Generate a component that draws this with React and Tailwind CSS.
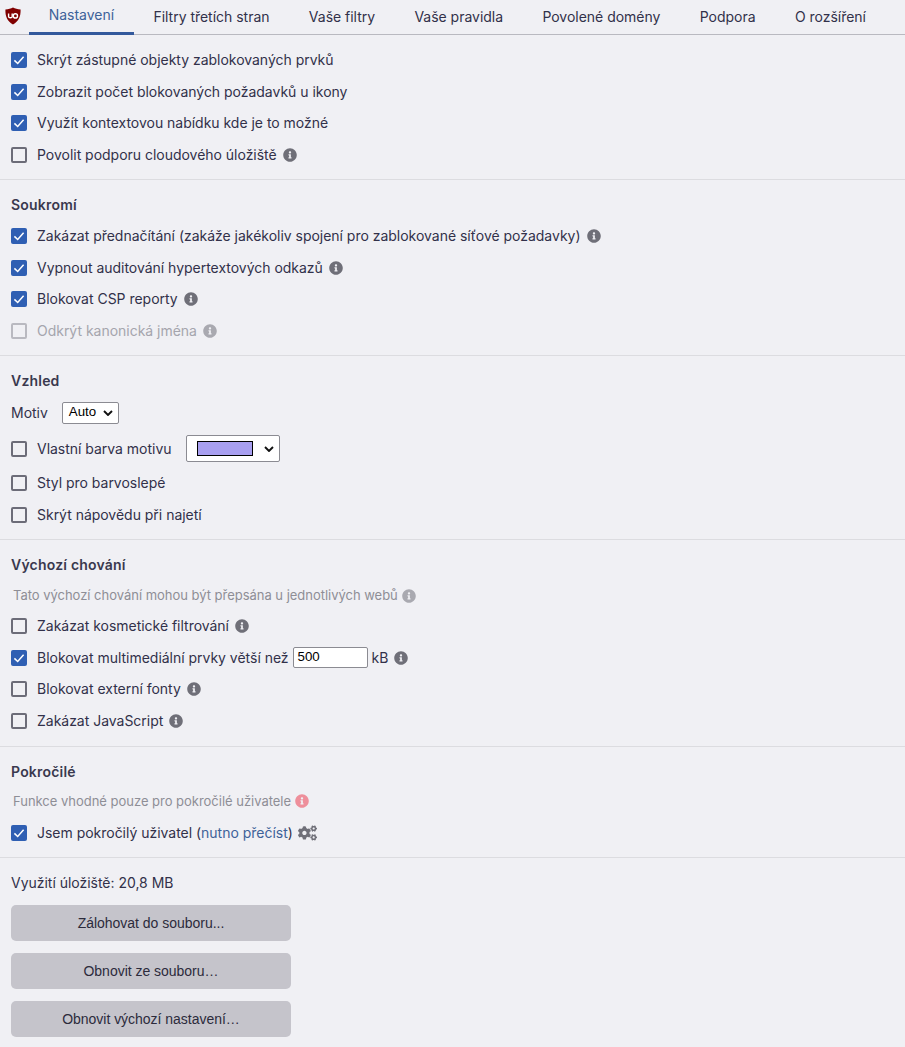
import { FaInfoCircle, FaCogs } from "react-icons/fa";

const tabs = [
  "Nastavení",
  "Filtry třetích stran",
  "Vaše filtry",
  "Vaše pravidla",
  "Povolené domény",
  "Podpora",
  "O rozšíření",
];

function Logo() {
  return (
    <svg viewBox="0 0 16 18" className="w-4 h-[18px]">
      <path
        d="M8 .5C10 1.6 12.6 2.4 15.6 2.5 15.8 9.5 13.6 14.6 8 17.4 2.4 14.6.2 9.5.4 2.5 3.4 2.4 6 1.6 8 .5Z"
        fill="#800000"
      />
      <path d="M3.6 6.4V9.4C3.6 11.2 7.2 11.2 7.2 9.4V6.4" fill="none" stroke="#fff" strokeWidth="1.4" />
      <circle cx="10.4" cy="8.9" r="2.1" fill="none" stroke="#fff" strokeWidth="1.4" />
    </svg>
  );
}

function Check({ checked, disabled }) {
  if (checked) {
    return (
      <span className="w-4 h-4 shrink-0 rounded-[2px] bg-[#2f5fb3] flex items-center justify-center">
        <svg viewBox="0 0 16 16" className="w-4 h-4">
          <path d="M3.4 8.4 6.7 11.5 12.6 4.8" fill="none" stroke="#fff" strokeWidth="1.5" />
        </svg>
      </span>
    );
  }
  return (
    <span
      className={
        disabled
          ? "w-4 h-4 shrink-0 rounded-[2px] border-2 border-[#b9b9c0]"
          : "w-4 h-4 shrink-0 rounded-[2px] border-2 border-[#6c6c78]"
      }
    />
  );
}

function Info({ light, red }) {
  let color = "text-[#6f6f78]";
  if (light) color = "text-[#a9a9b0]";
  if (red) color = "text-[#ee8f9b]";
  return <FaInfoCircle className={"w-[14px] h-[14px] shrink-0 " + color} />;
}

function Row({ label, checked, disabled, info, children }) {
  return (
    <div className="h-[31.5px] flex items-center">
      <Check checked={checked} disabled={disabled} />
      <span className={disabled ? "ml-[10px] text-[#a5a5ad]" : "ml-[10px]"}>{label}</span>
      {children}
      {info && (
        <span className="ml-[6px]">
          <Info light={disabled} />
        </span>
      )}
    </div>
  );
}

function Heading({ children }) {
  return (
    <div className="h-[31.5px] flex items-center font-semibold tracking-[0.2px] text-[#3a394e]">{children}</div>
  );
}

function Section({ children, wide }) {
  return (
    <div className={wide ? "px-[11px] pt-[9.3px] pb-[9.25px] border-b border-[#dcdce0]" : "px-[11px] pt-[9.3px] pb-[8.5px] border-b border-[#dcdce0]"}>
      {children}
    </div>
  );
}

function Chevron() {
  return (
    <svg viewBox="0 0 10 6" className="w-[10px] h-[6px]">
      <path d="M1 1 5 5 9 1" fill="none" stroke="#111" strokeWidth="1.9" />
    </svg>
  );
}

function FileButton({ children }) {
  return (
    <button className="w-[280px] h-9 rounded-[5px] bg-[#c5c4cb] text-[#2c2b3c] font-['Liberation_Sans',sans-serif] text-sm">
      {children}
    </button>
  );
}

export default function App() {
  return (
    <div className="w-[905px] h-[1047px] overflow-hidden bg-[#f0f0f4] text-[#32314a] text-sm tracking-[-0.02px] font-['Inter',sans-serif]">
      <div className="h-[35px] flex border-b border-[#b9b9c0]">
        <div className="w-[29px] flex items-center pl-[5px] pb-[3px] shrink-0">
          <Logo />
        </div>
        {tabs.map((tab, i) => (
          <div
            key={tab}
            className={
              i === 0
                ? "h-[35px] px-[19.7px] pt-[1px] pb-[3px] flex items-center text-[#3e6299] border-b-[3px] border-[#33599c]"
                : "h-[35px] px-[19.7px] pt-[1px] pb-[3px] flex items-center"
            }
          >
            {tab}
          </div>
        ))}
      </div>

      <Section>
        <Row checked label="Skrýt zástupné objekty zablokovaných prvků" />
        <Row checked label="Zobrazit počet blokovaných požadavků u ikony" />
        <Row checked label="Využít kontextovou nabídku kde je to možné" />
        <Row info label="Povolit podporu cloudového úložiště" />
      </Section>

      <Section>
        <Heading>Soukromí</Heading>
        <Row checked info label="Zakázat přednačítání (zakáže jakékoliv spojení pro zablokované síťové požadavky)" />
        <Row checked info label="Vypnout auditování hypertextových odkazů" />
        <Row checked info label="Blokovat CSP reporty" />
        <Row disabled info label="Odkrýt kanonická jména" />
      </Section>

      <Section>
        <Heading>Vzhled</Heading>
        <div className="h-[31.5px] flex items-center">
          <span>Motiv</span>
          <div className="ml-[14px] w-[57px] h-[22px] flex items-center justify-between pl-[6px] pr-[5px] bg-white border border-[#8b8b92] rounded-[2px] text-[13.3px] text-black font-['Liberation_Sans',sans-serif]">
            Auto
            <Chevron />
          </div>
        </div>
        <div className="h-[39px] pt-[2px] flex items-center">
          <Check />
          <span className="ml-[10px]">Vlastní barva motivu</span>
          <div className="ml-[14px] w-[94px] h-[27px] flex items-center justify-between pl-[10px] pr-[5px] bg-white border border-[#8b8b92] rounded-[2px]">
            <span className="w-14 h-[15px] bg-[#a89ff0] border border-black" />
            <Chevron />
          </div>
        </div>
        <Row label="Styl pro barvoslepé" />
        <Row label="Skrýt nápovědu při najetí" />
      </Section>

      <Section wide>
        <Heading>Výchozí chování</Heading>
        <div className="h-[30px] pl-[2px] flex items-center gap-[4px] text-[13px] text-[#8e8e96]">
          Tato výchozí chování mohou být přepsána u jednotlivých webů
          <Info light />
        </div>
        <Row info label="Zakázat kosmetické filtrování" />
        <Row checked info label="Blokovat multimediální prvky větší než">
          <div className="ml-1 w-[75px] h-[21px] px-1 flex items-center bg-white border border-[#8b8b92] rounded-[2px] text-[13.3px] text-black font-['Liberation_Sans',sans-serif]">
            500
          </div>
          <span className="ml-1">kB</span>
        </Row>
        <Row info label="Blokovat externí fonty" />
        <Row info label="Zakázat JavaScript" />
      </Section>

      <Section>
        <Heading>Pokročilé</Heading>
        <div className="h-[27px] mb-[2.5px] pl-[2px] flex items-center gap-[4px] text-[13px] text-[#8e8e96]">
          Funkce vhodné pouze pro pokročilé uživatele
          <Info red />
        </div>
        <div className="h-[31.5px] flex items-center">
          <Check checked />
          <span className="ml-[10px]">
            Jsem pokročilý uživatel (<span className="text-[#3e6299]">nutno přečíst</span>)
          </span>
          <FaCogs className="ml-[5px] w-[19px] h-[16px] text-[#6f6f78]" />
        </div>
      </Section>

      <div className="px-[11px] pt-[16px] flex flex-col items-start">
        <div className="h-[17px] flex items-center mb-[14px]">Využití úložiště: 20,8 MB</div>
        <div className="flex flex-col gap-3">
          <FileButton>Zálohovat do souboru...</FileButton>
          <FileButton>Obnovit ze souboru…</FileButton>
          <FileButton>Obnovit výchozí nastavení…</FileButton>
        </div>
      </div>
    </div>
  );
}
